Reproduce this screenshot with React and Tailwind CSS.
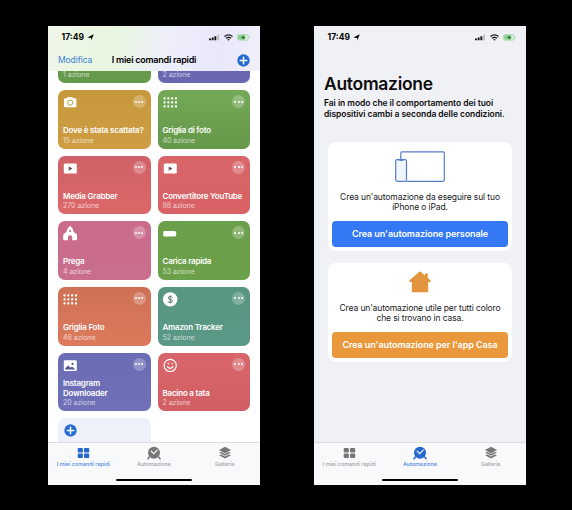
import React from 'react';

const WHITE = 'white';

function Glyph({ name, hole }) {
  return (
    <svg width="15" height="15" viewBox="0 0 15 15" fill={WHITE}>
      {name === 'camera' && (
        <>
          <path d="M1 4.4Q1 3.3 2.1 3.3H4l.8-1.2h4.4l.8 1.2h2.3q1.1 0 1.1 1.1v6.8q0 1.1-1.1 1.1H2.1Q1 12.3 1 11.2Z" />
          <circle cx="7.2" cy="7.6" r="2.6" fill="none" stroke={hole} strokeWidth="1" />
        </>
      )}
      {name === 'video' && (
        <>
          <rect x=".8" y="2.6" width="13" height="10" rx="1.3" />
          <path d="M5.7 5.4v4.4L9.5 7.6Z" fill={hole} />
        </>
      )}
      {name === 'grid' &&
        [1.6, 5.4, 9.2, 13].map((x) =>
          [3.4, 7.4, 11.4].map((y) => <rect key={x + '-' + y} x={x - 1.1} y={y - 1.1} width="2.1" height="2.1" rx=".6" />)
        )}
      {name === 'church' && (
        <path d="M7 0Q7.5 0 8 .7L9.6 2.4 10.8 6.1 13.2 7.7Q14 8.2 14 9.2V13.2q0 1-1 1H9.2V11Q9.2 9.3 7.1 9.3T5 11v3.2H1.2q-1 0-1-1V9.2Q.2 8.2 1 7.7L3.4 6.1 4.6 2.4 6.2.7Q6.6 0 7 0ZM7.1 3.9a1.1 1.1 0 1 0 .1 2.2 1.1 1.1 0 0 0-.1-2.2Z" fillRule="evenodd" />
      )}
      {name === 'battery' && (
        <>
          <rect x=".2" y="5" width="12.8" height="5.6" rx="1.4" />
          <path d="M13.5 6.5q1.1.9 0 2.5Z" />
        </>
      )}
      {name === 'dollar' && (
        <>
          <circle cx="7.2" cy="7.4" r="7.2" />
          <path d="M9.3 5.7Q9 4.5 7.2 4.5 5.3 4.5 5.3 5.9q0 1.1 1.9 1.5 2.2.4 2.2 1.7 0 1.4-2.2 1.4-1.9 0-2.2-1.3M7.2 3.3v8.2" fill="none" stroke="#4b7168" strokeWidth=".9" />
        </>
      )}
      {name === 'image' && (
        <>
          <rect x=".8" y="2.2" width="13" height="10.8" rx="1.3" />
          <path d="M2.2 11.5v-1.3L5.2 7.4 7.5 9.8 9 8.6l3.4 2.9Z" fill={hole} />
          <circle cx="9.6" cy="5.9" r="1.1" fill={hole} />
        </>
      )}
      {name === 'smile' && (
        <g fill="none" stroke={WHITE} strokeWidth="1.2" strokeLinecap="round">
          <circle cx="7.2" cy="7.4" r="6.1" />
          <path d="M4.3 8.6Q7.2 12 10.1 8.6M5.3 5.3v.7M9.1 5.3v.7" />
        </g>
      )}
    </svg>
  );
}

function ShortcutCard({ color, icon, hole, title, count }) {
  return (
    <div className={`flex h-[58.6px] flex-col rounded-[7px] px-[5px] text-white ${color}`}>
      <div className="mt-[5px] flex h-[15px] shrink-0 items-start justify-between">
        <Glyph name={icon} hole={hole} />
        <span className="flex size-[13px] items-center justify-center gap-[1.2px] rounded-full bg-white/25">
          <i className="size-[2px] rounded-full bg-white" />
          <i className="size-[2px] rounded-full bg-white" />
          <i className="size-[2px] rounded-full bg-white" />
        </span>
      </div>
      <div className="mt-auto mb-[3px] whitespace-nowrap">
        <div className="text-[8px] leading-[9.5px] font-semibold tracking-[-0.22px]">{title}</div>
        <div className="text-[7px] leading-[10px] tracking-[-0.03px] text-white/65">{count} azione</div>
      </div>
    </div>
  );
}

function StatusBar() {
  return (
    <div className="flex h-[23px] items-center justify-between pr-[10px] pl-[13.5px]">
      <div className="flex items-center gap-[3px] text-[8.5px] font-bold text-black">
        17:49
        <svg width="7" height="7" viewBox="0 0 7 7"><path d="M6.8.2 4.2 6.8V3.9L.3 3.6Z" fill="black" /></svg>
      </div>
      <div className="flex items-center gap-[4px]">
        <svg width="11" height="7" viewBox="0 0 11 7">
          <path d="M0 4.6h1.9V6.3H0ZM2.7 3.6h1.9V6.3H2.7ZM5.4 2.2h1.9V6.3H5.4Z" fill="#111" />
          <path d="M8.3.6H10V6.3H8.3Z" fill="#bbb" />
        </svg>
        <svg width="9" height="7" viewBox="0 0 9 7" fill="none" stroke="#111" strokeWidth="1.3">
          <path d="M.5 2.5Q4.5-.6 8.5 2.5M2 4.3Q4.5 2.5 7 4.3" />
          <path d="M3.3 5.5Q4.5 4.6 5.7 5.5L4.5 6.8Z" fill="#111" stroke="none" />
        </svg>
        <svg width="13" height="7" viewBox="0 0 13 7">
          <rect x=".4" y=".6" width="11" height="5.6" rx="1.6" fill="#d7efd8" stroke="#9bcb9e" strokeWidth=".6" />
          <rect x="1.2" y="1.3" width="7.2" height="4.2" rx="1" fill="#81cb88" />
          <path d="M6.8 1 4.4 3.8H6L5.4 6 8 3.1H6.3Z" fill="#26522b" />
          <path d="M12.1 2.3q1 .9 0 2Z" fill="#93ba96" />
        </svg>
      </div>
    </div>
  );
}

function PlusBadge() {
  return (
    <svg width="13" height="13" viewBox="0 0 12 12">
      <circle cx="6" cy="6" r="5.7" fill="#246bd3" />
      <path d="M6 3v6M3 6h6" stroke="white" strokeWidth="1.4" strokeLinecap="round" />
    </svg>
  );
}

function TabBar({ active, className }) {
  const tone = (i) => (i === active ? 'text-[#2569ce]' : 'text-[#77777a]');
  const label = (i) => (i === active ? 'text-[#4b86dd]' : 'text-[#a0a0a5]');
  return (
    <div className={`flex h-[43px] shrink-0 flex-col border-t border-[#dcdce1] ${className}`}>
      <div className="grid h-[27px] grid-cols-3 pt-[3px] text-center text-[5.4px] leading-[9px] font-medium whitespace-nowrap">
        <div className={`flex flex-col items-center ${tone(0)}`}>
          <svg width="13" height="14" viewBox="0 0 13 14" fill="currentColor">
            <rect x=".7" y="2" width="5.2" height="4.4" rx="1" /><rect x="7" y="2" width="5.2" height="4.4" rx="1" />
            <rect x=".7" y="7.5" width="5.2" height="4.4" rx="1" /><rect x="7" y="7.5" width="5.2" height="4.4" rx="1" />
          </svg>
          <span className={label(0)}>I miei comandi rapidi</span>
        </div>
        <div className={`flex flex-col items-center ${tone(1)}`}>
          <svg width="14" height="14" viewBox="0 0 14 14">
            <circle cx="7" cy="6.7" r="6" fill="currentColor" />
            <path d="M4.2 5.2 6.6 7.7 10.3 4.1" fill="none" stroke="white" strokeWidth="1.1" strokeLinecap="round" />
            <path d="M2.3 11 1 12.8M11.7 11l1.3 1.8" stroke="currentColor" strokeWidth="1.5" strokeLinecap="round" />
          </svg>
          <span className={label(1)}>Automazione</span>
        </div>
        <div className={`flex flex-col items-center ${tone(2)}`}>
          <svg width="14" height="14" viewBox="0 0 14 14">
            <path d="M7 .8 13 4.1 7 7.4 1 4.1Z" fill="currentColor" />
            <path d="M1 6.6 3.2 5.9 7 8 10.8 5.9 13 6.6 7 9.8ZM1 9.2 3.2 8.5 7 10.6 10.8 8.5 13 9.2 7 12.6Z" fill="currentColor" />
          </svg>
          <span className={label(2)}>Galleria</span>
        </div>
      </div>
      <div className="mx-auto mt-[8.5px] h-[2.5px] w-[76px] rounded-full bg-black" />
    </div>
  );
}

function ShortcutsPhone() {
  return (
    <section className="flex h-[459px] w-[212px] flex-col overflow-hidden bg-white">
      <header className="h-[45px] shrink-0 bg-[linear-gradient(100deg,#eef6e9_0%,#e9f6df_32%,#edeefa_55%,#e9e8fb_80%,#f2effa_100%)]">
        <StatusBar />
        <div className="grid h-[22px] grid-cols-[1fr_auto_1fr] items-center px-[10px]">
          <span className="text-[8.5px] tracking-[-0.1px] text-[#3d80d8]">Modifica</span>
          <span className="text-[9px] font-semibold tracking-[-0.25px] text-black">I miei comandi rapidi</span>
          <span className="justify-self-end"><PlusBadge /></span>
        </div>
      </header>
      <div className="min-h-0 flex-1 overflow-hidden">
        <div className="-mt-[46.4px] grid grid-cols-[92.5px_92.5px] gap-x-[7px] gap-y-[7px] pl-[10px]">
          <ShortcutCard color="bg-[#65994b]" icon="none" title="" count={1} />
          <ShortcutCard color="bg-[#6867b0]" icon="none" title="" count={2} />
          <ShortcutCard color="bg-linear-to-b from-[#c6983c] to-[#cf9d43]" icon="camera" hole="#b0a03a" title="Dove è stata scattata?" count={15} />
          <ShortcutCard color="bg-linear-to-b from-[#74aa57] to-[#65974a]" icon="grid" title="Griglia di foto" count={40} />
          <ShortcutCard color="bg-linear-to-b from-[#cf6168] to-[#dc6768]" icon="video" hole="#6b4c50" title="Media Grabber" count={270} />
          <ShortcutCard color="bg-linear-to-b from-[#d86669] to-[#d86165]" icon="video" hole="#6b4c50" title="Convertitore YouTube" count={88} />
          <ShortcutCard color="bg-linear-to-b from-[#ca6b8c] to-[#c96e8d]" icon="church" title="Prega" count={4} />
          <ShortcutCard color="bg-linear-to-b from-[#6b9f4b] to-[#6c9f49]" icon="battery" title="Carica rapida" count={53} />
          <ShortcutCard color="bg-linear-to-b from-[#cd7155] to-[#dd795d]" icon="grid" title="Griglia Foto" count={46} />
          <ShortcutCard color="bg-linear-to-b from-[#579680] to-[#5b9888]" icon="dollar" title="Amazon Tracker" count={52} />
          <ShortcutCard color="bg-linear-to-b from-[#6b6db4] to-[#7070b9]" icon="image" hole="#55589a" title={<>Instagram<br />Downloader</>} count={20} />
          <ShortcutCard color="bg-linear-to-b from-[#d9666a] to-[#d15e63]" icon="smile" title="Bacino a tata" count={2} />
          <div className="h-[58.6px] rounded-[7px] bg-[#eef1f9] px-[6px] pt-[6px]"><PlusBadge /></div>
        </div>
      </div>
      <TabBar active={0} className="bg-[#f8f9fb]" />
    </section>
  );
}

function AutomationCard({ art, text, button, color, className }) {
  return (
    <div className={`flex flex-col items-center rounded-[8px] bg-white px-[4px] text-center ${className}`}>
      {art}
      <p className="text-[8.5px] leading-[10px] tracking-[-0.12px] whitespace-nowrap text-[#202022]">{text}</p>
      <button className={`mt-auto mb-[4px] h-[26px] w-full rounded-[4px] text-[9px] font-semibold tracking-[-0.08px] whitespace-nowrap text-white ${color}`}>{button}</button>
    </div>
  );
}

function AutomationPhone() {
  return (
    <section className="flex h-[459px] w-[212px] flex-col overflow-hidden bg-[#f0f1f5]">
      <StatusBar />
      <div className="pt-[24px] pl-[10px] whitespace-nowrap text-[#0c0c0e]">
        <h1 className="text-[17.5px] leading-[22px] font-semibold tracking-[-0.3px]">Automazione</h1>
        <p className="mt-[3px] text-[8.5px] leading-[11px] font-semibold tracking-[-0.05px]">Fai in modo che il comportamento dei tuoi<br />dispositivi cambi a seconda delle condizioni.</p>
      </div>
      <div className="mt-[22px] flex min-h-0 flex-1 flex-col gap-[12px] px-[14px]">
        <AutomationCard
          className="h-[109px] w-[184px]"
          color="bg-[#3478f6]"
          button="Crea un'automazione personale"
          text={<>Crea un'automazione da eseguire sul tuo<br />iPhone o iPad.</>}
          art={
            <svg className="mt-[8px] mb-[9px] shrink-0" width="50" height="33" viewBox="0 0 50 33" fill="none" stroke="#557fc7" strokeWidth="1.2">
              <path d="M5.8 9V3Q5.8 1.8 7 1.8H48.1Q49.3 1.8 49.3 3V30.1Q49.3 31.3 48.1 31.3H11.5" />
              <rect x=".7" y="9.6" width="10.8" height="21.7" rx="1.5" fill="#f0f4fc" />
              <path d="M4.3 10.4h3.6" />
            </svg>
          }
        />
        <AutomationCard
          className="h-[99px] w-[184px]"
          color="bg-[#e9983b]"
          button="Crea un'automazione per l'app Casa"
          text={<>Crea un'automazione utile per tutti coloro<br />che si trovano in casa.</>}
          art={
            <svg className="mt-[8px] mb-[10px] shrink-0" width="24" height="22" viewBox="0 0 24 22" fill="#e2953e">
              <path d="M12 .5Q12.5.5 13 1L17 4.5V2.5H19.8V7L23 9.8 22 11.1H20.2V20.2Q20.2 21.3 19.1 21.3H5Q3.9 21.3 3.9 20.2V11.1H2L1 9.8 11 1Q11.5.5 12 .5Z" />
            </svg>
          }
        />
      </div>
      <TabBar active={1} className="bg-[#f9f9fb]" />
    </section>
  );
}

export default function App() {
  return (
    <main className="flex h-[510px] w-[572px] gap-[54px] overflow-hidden bg-black pt-[26px] pl-[48px] font-['Inter','Liberation_Sans',sans-serif]">
      <ShortcutsPhone />
      <AutomationPhone />
    </main>
  );
}
